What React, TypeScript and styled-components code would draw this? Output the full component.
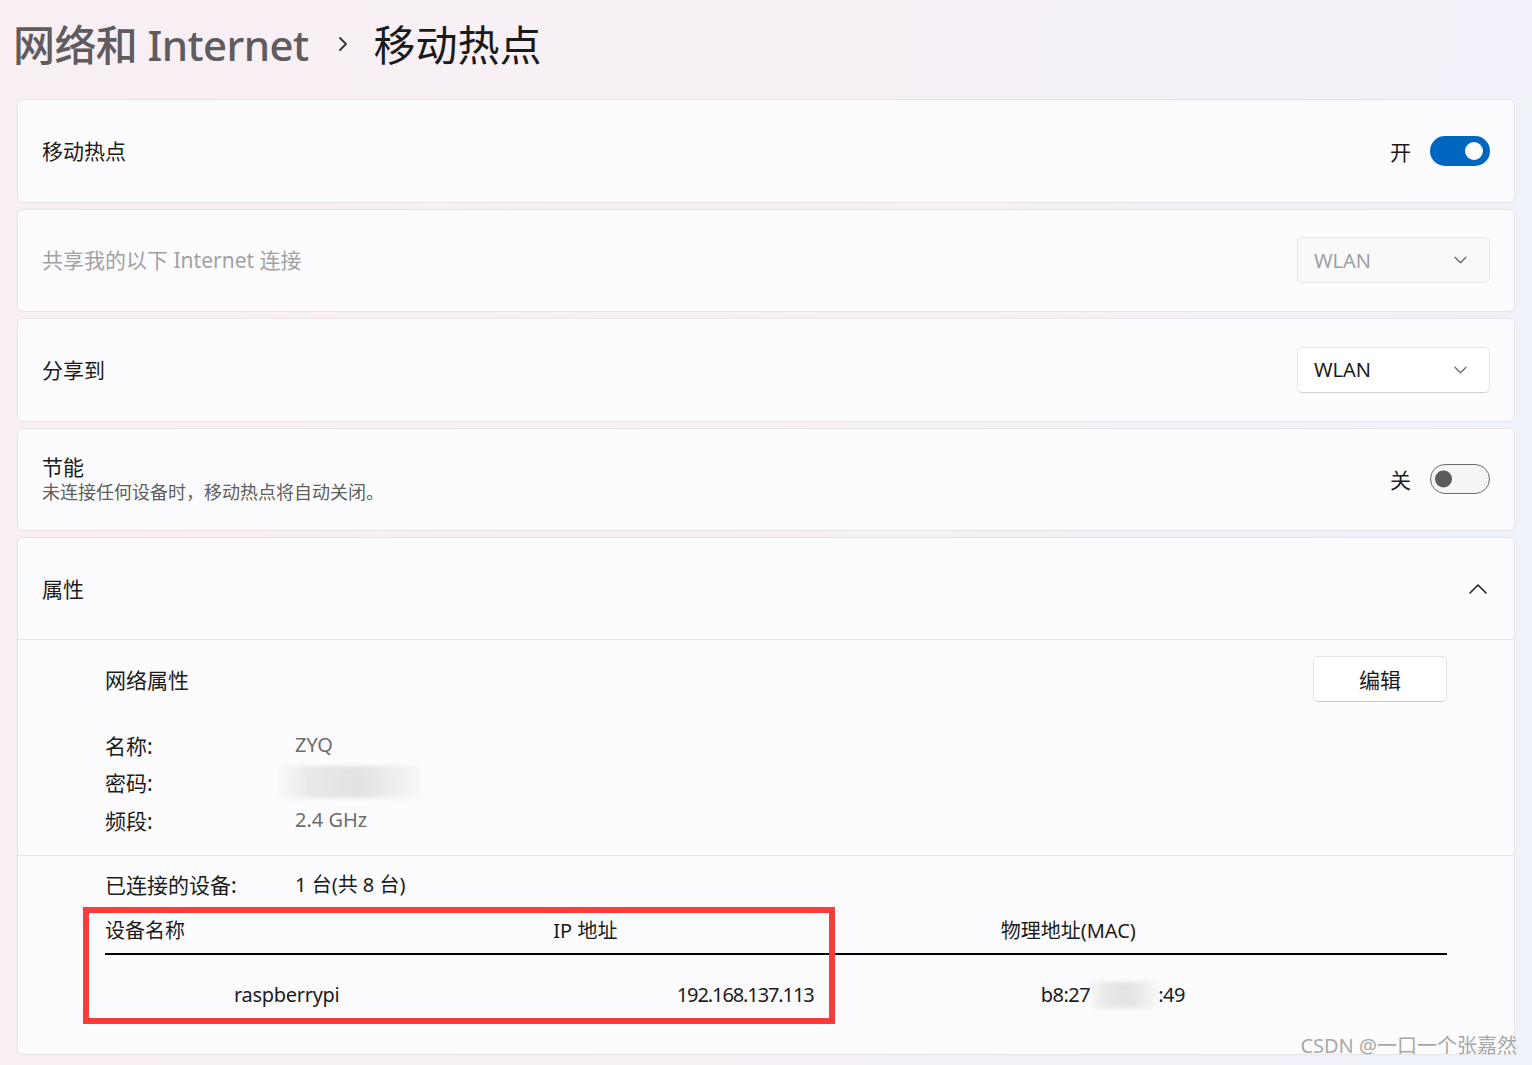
import styled, { createGlobalStyle } from "styled-components";

const GlobalStyle = createGlobalStyle`
  html, body {
    margin: 0;
    padding: 0;
  }
  body {
    font-family: "Noto Sans", "Noto Sans CJK SC", sans-serif;
    color: #1b1b1b;
  }
  * {
    box-sizing: border-box;
  }
`;

const Page = styled.div`
  position: relative;
  height: 1065px;
  overflow: hidden;
  padding: 0 17px;
  background: linear-gradient(100deg, #f8eff3 0%, #f6f1f6 55%, #eef2f9 100%);
`;

const Breadcrumb = styled.div`
  height: 99px;
  display: flex;
  align-items: center;
  padding-bottom: 15px;
  margin-left: -4px;
  font-size: 42px;
`;

const Crumb = styled.span<{ $current?: boolean }>`
  color: ${p => (p.$current ? "#1a1a1a" : "#5f5b5e")};
  font-weight: ${p => (p.$current ? 400 : 500)};
  letter-spacing: ${p => (p.$current ? "0" : "-0.6px")};
`;

const CrumbSep = styled.svg`
  width: 12px;
  height: 20px;
  margin: 4px 23px 0 30px;
`;

const CardList = styled.div`
  display: flex;
  flex-direction: column;
  gap: 6px;
`;

const Card = styled.div`
  height: 103.5px;
  border: 1px solid #e8e3e9;
  border-radius: 6px;
  background: #fcfbfd;
  display: flex;
  align-items: center;
  justify-content: space-between;
  padding: 0 24px;
`;

const CardText = styled.div`
  display: flex;
  flex-direction: column;
`;

const CardTitle = styled.div<{ $muted?: boolean }>`
  font-size: 21px;
  line-height: 26px;
  color: ${p => (p.$muted ? "#a2a2a2" : "#1b1b1b")};
`;

const CardSub = styled.div`
  font-size: 18px;
  line-height: 24px;
  color: #5e5e5e;
`;

const Control = styled.div`
  display: flex;
  align-items: center;
  gap: 19px;
`;

const StateLabel = styled.span`
  font-size: 21px;
  color: #1b1b1b;
`;

const Toggle = styled.div<{ $on?: boolean }>`
  width: 60px;
  height: 30px;
  border-radius: 15px;
  position: relative;
  background: ${p => (p.$on ? "#0067c0" : "#f5f4f6")};
  border: ${p => (p.$on ? "none" : "1.5px solid #6c6c6c")};

  &::after {
    content: "";
    position: absolute;
    top: 50%;
    transform: translateY(-50%);
    width: ${p => (p.$on ? 18 : 17)}px;
    height: ${p => (p.$on ? 18 : 17)}px;
    border-radius: 50%;
    background: ${p => (p.$on ? "#ffffff" : "#5b5b5b")};
    ${p => (p.$on ? "right: 7px;" : "left: 4px;")}
  }
`;

const Dropdown = styled.div<{ $disabled?: boolean }>`
  width: 193px;
  height: 46px;
  border-radius: 5px;
  border: 1px solid #e6e5e8;
  border-bottom-color: ${p => (p.$disabled ? "#e6e5e8" : "#d0d0d0")};
  background: ${p => (p.$disabled ? "#f9f9fb" : "#ffffff")};
  color: ${p => (p.$disabled ? "#a0a0a0" : "#1b1b1b")};
  display: flex;
  align-items: center;
  justify-content: space-between;
  padding: 0 22px 0 16px;
  font-size: 20px;
`;

const Expander = styled.div`
  border: 1px solid #e8e3e9;
  border-radius: 6px;
  background: #fcfbfd;
`;

const ExpanderHeader = styled.div`
  height: 102px;
  display: flex;
  align-items: center;
  justify-content: space-between;
  padding: 0 27px 0 24px;
  border-bottom: 1px solid #e8e3e9;
`;

const Section = styled.div<{ $divider?: boolean; $top: number; $bottom: number }>`
  padding: ${p => p.$top}px 67px ${p => p.$bottom}px 87px;
  border-bottom: ${p => (p.$divider ? "1px solid #e8e3e9" : "none")};
`;

const SectionHead = styled.div`
  display: flex;
  align-items: center;
  justify-content: space-between;
  font-size: 21px;
`;

const EditButton = styled.button`
  width: 134px;
  height: 46px;
  border: 1px solid #e4e3e6;
  border-bottom-color: #cdcdcd;
  border-radius: 5px;
  background: #ffffff;
  font-family: inherit;
  font-size: 21px;
  color: #1b1b1b;
`;

const KVList = styled.div`
  margin-top: 24px;
`;

const KVRow = styled.div<{ $h: number }>`
  display: grid;
  grid-template-columns: 190px 1fr;
  align-items: center;
  height: ${p => p.$h}px;
  font-size: 21px;
`;

const KVValue = styled.span<{ $muted?: boolean }>`
  color: ${p => (p.$muted ? "#6d6d6d" : "#1b1b1b")};
  font-size: 20px;
  display: flex;
  align-items: center;
`;

const Smudge = styled.span<{ $w: number; $h: number; $ml?: number }>`
  display: inline-block;
  width: ${p => p.$w}px;
  height: ${p => p.$h}px;
  margin-left: ${p => p.$ml ?? 0}px;
  background: linear-gradient(90deg, rgba(236, 236, 236, 0.2) 0%, #e9e9e9 20%, #e2e2e2 55%, #efefef 85%, rgba(240, 240, 240, 0.4) 100%);
  filter: blur(2px);
`;

const TableWrap = styled.div`
  position: relative;
  margin-top: 4px;
`;

const TableHead = styled.div`
  display: grid;
  grid-template-columns: repeat(3, 1fr);
  align-items: center;
  height: 48px;
  border-bottom: 2px solid #000000;
  font-size: 20px;
`;

const TableRow = styled.div`
  display: grid;
  grid-template-columns: repeat(3, 1fr);
  align-items: center;
  height: 80px;
  font-size: 20px;
`;

const Cell = styled.div<{ $pl?: number; $pr?: number; $right?: boolean; $spacing?: number }>`
  padding-left: ${p => p.$pl ?? 0}px;
  padding-right: ${p => p.$pr ?? 0}px;
  letter-spacing: ${p => p.$spacing ?? 0}px;
  display: flex;
  align-items: center;
  justify-content: ${p => (p.$right ? "flex-end" : "flex-start")};
`;

const RedBox = styled.div`
  position: absolute;
  left: -22px;
  top: 0;
  width: 752px;
  height: 117px;
  border: 6px solid #fd3b3b;
  pointer-events: none;
`;

const Watermark = styled.div`
  position: absolute;
  right: 15px;
  bottom: 6px;
  font-size: 20px;
  color: #a8a8a8;
`;

const ChevronDown = () => (
  <svg width="13" height="8" viewBox="0 0 13 8" fill="none">
    <path d="M1 1.2l5.5 5.5L12 1.2" stroke="#6a6a6a" strokeWidth="1.3" strokeLinecap="round" strokeLinejoin="round" />
  </svg>
);

const ChevronUp = () => (
  <svg width="18" height="10" viewBox="0 0 18 10" fill="none">
    <path d="M1 9L9 1l8 8" stroke="#1b1b1b" strokeWidth="1.5" strokeLinecap="round" strokeLinejoin="round" />
  </svg>
);

export default function App() {
  return (
    <>
      <GlobalStyle />
      <Page>
        <Breadcrumb>
          <Crumb>网络和 Internet</Crumb>
          <CrumbSep viewBox="0 0 12 20" fill="none">
            <path d="M2 4l6 6-6 6" stroke="#3a3a3a" strokeWidth="2" strokeLinecap="round" strokeLinejoin="round" />
          </CrumbSep>
          <Crumb $current>移动热点</Crumb>
        </Breadcrumb>

        <CardList>
          <Card>
            <CardTitle>移动热点</CardTitle>
            <Control>
              <StateLabel>开</StateLabel>
              <Toggle $on />
            </Control>
          </Card>

          <Card>
            <CardTitle $muted>共享我的以下 Internet 连接</CardTitle>
            <Dropdown $disabled>
              <span>WLAN</span>
              <ChevronDown />
            </Dropdown>
          </Card>

          <Card>
            <CardTitle>分享到</CardTitle>
            <Dropdown>
              <span>WLAN</span>
              <ChevronDown />
            </Dropdown>
          </Card>

          <Card>
            <CardText>
              <CardTitle>节能</CardTitle>
              <CardSub>未连接任何设备时，移动热点将自动关闭。</CardSub>
            </CardText>
            <Control>
              <StateLabel>关</StateLabel>
              <Toggle />
            </Control>
          </Card>

          <Expander>
            <ExpanderHeader>
              <CardTitle>属性</CardTitle>
              <ChevronUp />
            </ExpanderHeader>

            <Section $divider $top={16} $bottom={16}>
              <SectionHead>
                <span>网络属性</span>
                <EditButton>编辑</EditButton>
              </SectionHead>
              <KVList>
                <KVRow $h={37.5}>
                  <span>名称:</span>
                  <KVValue $muted>ZYQ</KVValue>
                </KVRow>
                <KVRow $h={37.5}>
                  <span>密码:</span>
                  <KVValue $muted>
                    <Smudge $w={140} $h={32} $ml={-15} />
                  </KVValue>
                </KVRow>
                <KVRow $h={37.5}>
                  <span>频段:</span>
                  <KVValue $muted>2.4 GHz</KVValue>
                </KVRow>
              </KVList>
            </Section>

            <Section $top={9} $bottom={19}>
              <KVRow $h={38}>
                <span>已连接的设备:</span>
                <KVValue>1 台(共 8 台)</KVValue>
              </KVRow>
              <TableWrap>
                <TableHead>
                  <Cell>设备名称</Cell>
                  <Cell $pl={1}>IP 地址</Cell>
                  <Cell $pl={1}>物理地址(MAC)</Cell>
                </TableHead>
                <TableRow>
                  <Cell $pl={129} $spacing={-0.3}>raspberrypi</Cell>
                  <Cell $right $pr={186} $spacing={-1.1}>192.168.137.113</Cell>
                  <Cell $pl={41} $spacing={-0.5}>
                    b8:27
                    <Smudge $w={68} $h={26} />
                    :49
                  </Cell>
                </TableRow>
                <RedBox />
              </TableWrap>
            </Section>
          </Expander>
        </CardList>

        <Watermark>CSDN @一口一个张嘉然</Watermark>
      </Page>
    </>
  );
}
